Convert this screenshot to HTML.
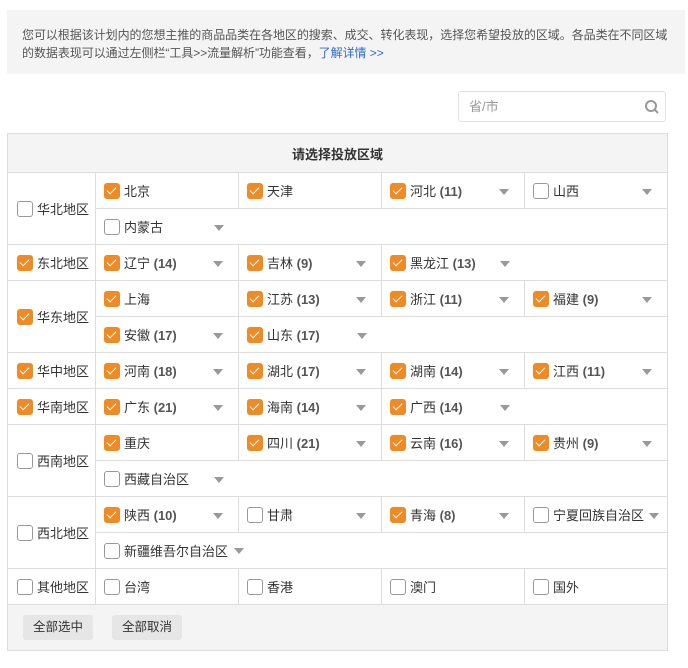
<!DOCTYPE html>
<html><head><meta charset="utf-8"><style>
*{box-sizing:border-box;margin:0;padding:0}
body{width:688px;height:668px;background:#fff;font-family:"Liberation Sans","Noto Sans CJK SC",sans-serif;font-size:13px;color:#333;position:relative}
.info{position:absolute;left:7px;top:10px;width:678px;height:64px;background:#f4f4f4;padding:16px 0 0 15px;font-size:12px;letter-spacing:-0.05px;line-height:18px;color:#555;white-space:nowrap;overflow:hidden}
.info a{color:#2f6bd1;text-decoration:none}
.search{position:absolute;left:458px;top:91px;width:208px;height:31px;border:1px solid #e2e2e2;border-radius:3px;padding:0 10px;line-height:29px;color:#999}
.search svg{position:absolute;right:5px;top:7px}
table{position:absolute;left:7px;top:133px;width:660px;border-collapse:collapse;table-layout:fixed}
td,th{border:1px solid #ddd;height:36px;padding:0 0 0 8px;position:relative;white-space:nowrap}
td.nl{border-left:none}
td.nr{border-right:none}
th{height:39px;background:#f4f4f4;font-weight:bold;font-size:13px;text-align:center;padding:0}
td.r{padding-left:9px}
.cb{display:inline-block;width:16px;height:16px;border:1px solid #999;border-radius:3px;vertical-align:-3px;margin-right:4px;background:#fff;position:relative}
.cb.on{background:#f08a24;border-color:#f08a24}
.cb.on:after{content:"";position:absolute;left:4px;top:1px;width:4px;height:8px;border:solid #fff;border-width:0 1.5px 1.5px 0;transform:rotate(45deg)}
b{font-weight:bold;color:#555}
.ar{position:absolute;right:15px;top:16px;width:0;height:0;border-left:5px solid transparent;border-right:5px solid transparent;border-top:6px solid #999}
.ar2{display:inline-block;margin-left:6px;width:0;height:0;border-left:5px solid transparent;border-right:5px solid transparent;border-top:6px solid #999;vertical-align:2px}
td.f{background:#f4f4f4;height:46px;padding-left:15px}
.btn{display:inline-block;background:#e6e6e6;border-radius:3px;height:25px;line-height:25px;padding:0 10px;margin-right:19px;font-size:12.5px}
</style></head><body>
<div class="info">您可以根据该计划内的您想主推的商品品类在各地区的搜索、成交、转化表现，选择您希望投放的区域。各品类在不同区域<br>的数据表现可以通过左侧栏“工具&gt;&gt;流量解析”功能查看，<a>了解详情 &gt;&gt;</a></div>
<div class="search">省/市<svg width="16" height="16" viewBox="0 0 16 16"><circle cx="7" cy="7" r="5" fill="none" stroke="#999" stroke-width="2"/><path d="M10.5 10.5L14 14" stroke="#999" stroke-width="2"/></svg></div>
<table>
<colgroup><col style="width:88px"><col style="width:143px"><col style="width:143px"><col style="width:143px"><col style="width:143px"></colgroup>
<tr><th colspan="5">请选择投放区域</th></tr>
<tr><td class="r" rowspan="2"><span class="cb"></span>华北地区</td><td><span class="cb on"></span>北京</td><td><span class="cb on"></span>天津</td><td><span class="cb on"></span>河北 <b>(11)</b><i class="ar"></i></td><td><span class="cb"></span>山西<i class="ar"></i></td></tr>
<tr><td class="nr"><span class="cb"></span>内蒙古<i class="ar"></i></td><td colspan="3" class="nl"></td></tr>
<tr><td class="r"><span class="cb on"></span>东北地区</td><td><span class="cb on"></span>辽宁 <b>(14)</b><i class="ar"></i></td><td><span class="cb on"></span>吉林 <b>(9)</b><i class="ar"></i></td><td class="nr"><span class="cb on"></span>黑龙江 <b>(13)</b><i class="ar"></i></td><td class="nl"></td></tr>
<tr><td class="r" rowspan="2"><span class="cb on"></span>华东地区</td><td><span class="cb on"></span>上海</td><td><span class="cb on"></span>江苏 <b>(13)</b><i class="ar"></i></td><td><span class="cb on"></span>浙江 <b>(11)</b><i class="ar"></i></td><td><span class="cb on"></span>福建 <b>(9)</b><i class="ar"></i></td></tr>
<tr><td><span class="cb on"></span>安徽 <b>(17)</b><i class="ar"></i></td><td class="nr"><span class="cb on"></span>山东 <b>(17)</b><i class="ar"></i></td><td colspan="2" class="nl"></td></tr>
<tr><td class="r"><span class="cb on"></span>华中地区</td><td><span class="cb on"></span>河南 <b>(18)</b><i class="ar"></i></td><td><span class="cb on"></span>湖北 <b>(17)</b><i class="ar"></i></td><td><span class="cb on"></span>湖南 <b>(14)</b><i class="ar"></i></td><td><span class="cb on"></span>江西 <b>(11)</b><i class="ar"></i></td></tr>
<tr><td class="r"><span class="cb on"></span>华南地区</td><td><span class="cb on"></span>广东 <b>(21)</b><i class="ar"></i></td><td><span class="cb on"></span>海南 <b>(14)</b><i class="ar"></i></td><td class="nr"><span class="cb on"></span>广西 <b>(14)</b><i class="ar"></i></td><td class="nl"></td></tr>
<tr><td class="r" rowspan="2"><span class="cb"></span>西南地区</td><td><span class="cb on"></span>重庆</td><td><span class="cb on"></span>四川 <b>(21)</b><i class="ar"></i></td><td><span class="cb on"></span>云南 <b>(16)</b><i class="ar"></i></td><td><span class="cb on"></span>贵州 <b>(9)</b><i class="ar"></i></td></tr>
<tr><td class="nr"><span class="cb"></span>西藏自治区<i class="ar"></i></td><td colspan="3" class="nl"></td></tr>
<tr><td class="r" rowspan="2"><span class="cb"></span>西北地区</td><td><span class="cb on"></span>陕西 <b>(10)</b><i class="ar"></i></td><td><span class="cb"></span>甘肃<i class="ar"></i></td><td><span class="cb on"></span>青海 <b>(8)</b><i class="ar"></i></td><td><span class="cb"></span>宁夏回族自治区<i class="ar" style="right:8px"></i></td></tr>
<tr><td colspan="4"><span class="cb"></span>新疆维吾尔自治区<i class="ar2"></i></td></tr>
<tr><td class="r"><span class="cb"></span>其他地区</td><td><span class="cb"></span>台湾</td><td><span class="cb"></span>香港</td><td><span class="cb"></span>澳门</td><td><span class="cb"></span>国外</td></tr>
<tr><td class="f" colspan="5"><span class="btn">全部选中</span><span class="btn">全部取消</span></td></tr>
</table>
</body></html>
